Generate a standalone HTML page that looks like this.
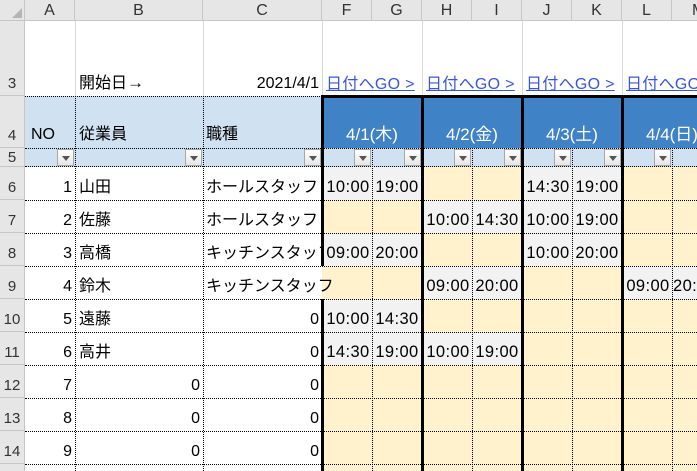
<!DOCTYPE html>
<html style="overflow:hidden;height:471px"><head><meta charset="utf-8"><style>
*{margin:0;padding:0;box-sizing:border-box}
body{width:697px;height:471px;overflow:hidden;background:#fff;position:relative;font-family:"Liberation Sans","Noto Sans CJK JP",sans-serif;font-size:16px;color:#000}
div{position:absolute}
.ch{top:0;height:21px;background:#e6e6e6;border-right:1px solid #c6c6c6;border-bottom:1px solid #c6c6c6;text-align:center;line-height:21px;font-size:16px;color:#333}
.rh{left:0;width:25px;background:#e6e6e6;border-right:1px solid #c6c6c6;border-bottom:1px solid #c6c6c6;text-align:center;font-size:15px;color:#333;display:flex;align-items:flex-end;justify-content:center;padding-bottom:3px}
.gv{width:1px;background:#d8d8d8}
.hd{height:0;border-top:1px dotted #000}
.vd{width:0;border-left:1px dotted #000}
.tk{width:3px;background:#000}
.t{height:33px;display:flex;align-items:flex-end;padding-bottom:3px;white-space:nowrap}
.r{justify-content:flex-end;padding-right:3px}
.l{padding-left:3px}
.tm{width:50px;justify-content:center;font-size:16.5px;letter-spacing:.4px}
.fb{top:149px;width:17px;height:17px;background:linear-gradient(#fff,#e6e6e6);border:1px solid #a8a8a8}
.fb:after{content:"";position:absolute;left:4px;top:6px;border-left:4px solid transparent;border-right:4px solid transparent;border-top:5px solid #555}
.g{background:#f2f2f2;height:33px;width:100px}
.bh{top:96px;height:52px;width:100px;background:#3f82c5;color:#fff;font-size:17px;text-align:center;line-height:18px;padding-top:30px}
.lk{top:70px;color:#3b55d9;text-decoration:underline;font-size:16px;white-space:nowrap;letter-spacing:.3px}
</style></head><body>
<div class="ch" style="left:0;width:25px"></div>
<div style="left:12px;top:8px;width:0;height:0;border-left:10px solid transparent;border-bottom:10px solid #b5b5b5"></div>
<div class="ch" style="left:25px;width:50px">A</div>
<div class="ch" style="left:75px;width:128px">B</div>
<div class="ch" style="left:203px;width:119px">C</div>
<div class="ch" style="left:322px;width:50px">F</div>
<div class="ch" style="left:372px;width:50px">G</div>
<div class="ch" style="left:422px;width:50px">H</div>
<div class="ch" style="left:472px;width:50px">I</div>
<div class="ch" style="left:522px;width:50px">J</div>
<div class="ch" style="left:572px;width:50px">K</div>
<div class="ch" style="left:622px;width:50px">L</div>
<div class="ch" style="left:672px;width:25px;border-right:none;text-align:left;padding-left:20px;overflow:hidden">M</div>
<div class="rh" style="top:21px;height:75px">3</div>
<div class="rh" style="top:96px;height:52px">4</div>
<div class="rh" style="top:148px;height:19px;padding-bottom:1px;line-height:14px">5</div>
<div class="rh" style="top:167px;height:33px">6</div>
<div class="rh" style="top:200px;height:33px">7</div>
<div class="rh" style="top:233px;height:33px">8</div>
<div class="rh" style="top:266px;height:33px">9</div>
<div class="rh" style="top:299px;height:33px">10</div>
<div class="rh" style="top:332px;height:33px">11</div>
<div class="rh" style="top:365px;height:33px">12</div>
<div class="rh" style="top:398px;height:33px">13</div>
<div class="rh" style="top:431px;height:33px">14</div>
<div class="rh" style="top:464px;height:7px;border-bottom:none"></div>
<div class="gv" style="left:75px;top:21px;height:75px"></div>
<div class="gv" style="left:203px;top:21px;height:75px"></div>
<div class="gv" style="left:322px;top:21px;height:75px"></div>
<div class="gv" style="left:422px;top:21px;height:75px"></div>
<div class="gv" style="left:522px;top:21px;height:75px"></div>
<div class="gv" style="left:622px;top:21px;height:75px"></div>
<div class="t l" style="left:75px;top:63px;height:33px;padding-left:4px">開始日<span style="font-size:17px">→</span></div>
<div class="t r" style="left:203px;top:63px;width:119px">2021/4/1</div>
<div class="lk" style="left:326px">日付へGO &gt;</div>
<div class="lk" style="left:426px">日付へGO &gt;</div>
<div class="lk" style="left:526px">日付へGO &gt;</div>
<div class="lk" style="left:626px">日付へGO &gt;</div>
<div style="left:25px;top:96px;width:297px;height:71px;background:#d0e1f2"></div>
<div style="left:322px;top:148px;width:375px;height:19px;background:#d0e1f2"></div>
<div class="bh" style="left:322px">4/1(木)</div>
<div class="bh" style="left:422px">4/2(金)</div>
<div class="bh" style="left:522px">4/3(土)</div>
<div class="bh" style="left:622px">4/4(日)</div>
<div class="t l" style="left:25px;top:114px;padding-left:6px">NO</div>
<div class="t l" style="left:75px;top:114px;padding-left:4px">従業員</div>
<div class="t l" style="left:203px;top:114px">職種</div>
<div style="left:322px;top:167px;width:375px;height:304px;background:#fff2cc"></div>
<div class="g" style="left:322px;top:167px"></div><div class="g" style="left:522px;top:167px"></div>
<div class="g" style="left:422px;top:200px"></div><div class="g" style="left:522px;top:200px"></div>
<div class="g" style="left:322px;top:233px"></div><div class="g" style="left:522px;top:233px"></div>
<div class="g" style="left:422px;top:266px"></div><div class="g" style="left:622px;top:266px;width:75px"></div>
<div class="g" style="left:322px;top:299px"></div>
<div class="g" style="left:322px;top:332px"></div><div class="g" style="left:422px;top:332px"></div>
<div class="hd" style="left:25px;top:96px;width:297px"></div>
<div class="hd" style="left:25px;top:148px;width:672px"></div>
<div class="hd" style="left:25px;top:166px;width:672px"></div>
<div class="hd" style="left:25px;top:200px;width:672px"></div>
<div class="hd" style="left:25px;top:233px;width:672px"></div>
<div class="hd" style="left:25px;top:266px;width:672px"></div>
<div class="hd" style="left:25px;top:299px;width:672px"></div>
<div class="hd" style="left:25px;top:332px;width:672px"></div>
<div class="hd" style="left:25px;top:365px;width:672px"></div>
<div class="hd" style="left:25px;top:398px;width:672px"></div>
<div class="hd" style="left:25px;top:431px;width:672px"></div>
<div class="hd" style="left:25px;top:464px;width:672px"></div>
<div class="vd" style="left:75px;top:96px;height:375px"></div>
<div class="vd" style="left:203px;top:96px;height:375px"></div>
<div class="vd" style="left:372px;top:148px;height:323px"></div>
<div class="vd" style="left:472px;top:148px;height:323px"></div>
<div class="vd" style="left:572px;top:148px;height:323px"></div>
<div class="vd" style="left:672px;top:148px;height:323px"></div>
<div style="left:321px;top:95px;width:376px;height:3px;background:#000"></div>
<div class="tk" style="left:321px;top:95px;height:171px"></div>
<div class="tk" style="left:321px;top:299px;height:172px"></div>
<div class="tk" style="left:421px;top:95px;height:376px"></div>
<div class="tk" style="left:521px;top:95px;height:376px"></div>
<div class="tk" style="left:621px;top:95px;height:376px"></div>
<div class="fb" style="left:57px"></div>
<div class="fb" style="left:185px"></div>
<div class="fb" style="left:304px"></div>
<div class="fb" style="left:354px"></div>
<div class="fb" style="left:404px"></div>
<div class="fb" style="left:454px"></div>
<div class="fb" style="left:504px"></div>
<div class="fb" style="left:554px"></div>
<div class="fb" style="left:604px"></div>
<div class="fb" style="left:654px"></div>
<div class="t r" style="left:25px;top:167px;width:50px">1</div>
<div class="t r" style="left:25px;top:200px;width:50px">2</div>
<div class="t r" style="left:25px;top:233px;width:50px">3</div>
<div class="t r" style="left:25px;top:266px;width:50px">4</div>
<div class="t r" style="left:25px;top:299px;width:50px">5</div>
<div class="t r" style="left:25px;top:332px;width:50px">6</div>
<div class="t r" style="left:25px;top:365px;width:50px">7</div>
<div class="t r" style="left:25px;top:398px;width:50px">8</div>
<div class="t r" style="left:25px;top:431px;width:50px">9</div>
<div class="t l" style="left:75px;top:167px;padding-left:4px">山田</div>
<div class="t l" style="left:75px;top:200px;padding-left:4px">佐藤</div>
<div class="t l" style="left:75px;top:233px;padding-left:4px">高橋</div>
<div class="t l" style="left:75px;top:266px;padding-left:4px">鈴木</div>
<div class="t l" style="left:75px;top:299px;padding-left:4px">遠藤</div>
<div class="t l" style="left:75px;top:332px;padding-left:4px">高井</div>
<div class="t r" style="left:75px;top:365px;width:128px">0</div>
<div class="t r" style="left:75px;top:398px;width:128px">0</div>
<div class="t r" style="left:75px;top:431px;width:128px">0</div>
<div class="t l" style="left:203px;top:167px">ホールスタッフ</div>
<div class="t l" style="left:203px;top:200px">ホールスタッフ</div>
<div class="t l" style="left:203px;top:233px;width:119px;overflow:hidden">キッチンスタッフ</div>
<div class="t l" style="left:203px;top:266px">キッチンスタッフ</div>
<div class="t r" style="left:203px;top:299px;width:119px">0</div>
<div class="t r" style="left:203px;top:332px;width:119px">0</div>
<div class="t r" style="left:203px;top:365px;width:119px">0</div>
<div class="t r" style="left:203px;top:398px;width:119px">0</div>
<div class="t r" style="left:203px;top:431px;width:119px">0</div>
<div class="t tm" style="left:323px;top:167px">10:00</div><div class="t tm" style="left:372px;top:167px">19:00</div>
<div class="t tm" style="left:523px;top:167px">14:30</div><div class="t tm" style="left:572px;top:167px">19:00</div>
<div class="t tm" style="left:423px;top:200px">10:00</div><div class="t tm" style="left:472px;top:200px">14:30</div>
<div class="t tm" style="left:523px;top:200px">10:00</div><div class="t tm" style="left:572px;top:200px">19:00</div>
<div class="t tm" style="left:323px;top:233px">09:00</div><div class="t tm" style="left:372px;top:233px">20:00</div>
<div class="t tm" style="left:523px;top:233px">10:00</div><div class="t tm" style="left:572px;top:233px">20:00</div>
<div class="t tm" style="left:423px;top:266px">09:00</div><div class="t tm" style="left:472px;top:266px">20:00</div>
<div class="t tm" style="left:623px;top:266px">09:00</div><div class="t tm" style="left:672px;top:266px;width:25px;overflow:hidden;justify-content:flex-start;padding-left:1px">20:00</div>
<div class="t tm" style="left:323px;top:299px">10:00</div><div class="t tm" style="left:372px;top:299px">14:30</div>
<div class="t tm" style="left:323px;top:332px">14:30</div><div class="t tm" style="left:372px;top:332px">19:00</div>
<div class="t tm" style="left:423px;top:332px">10:00</div><div class="t tm" style="left:472px;top:332px">19:00</div>
</body></html>
